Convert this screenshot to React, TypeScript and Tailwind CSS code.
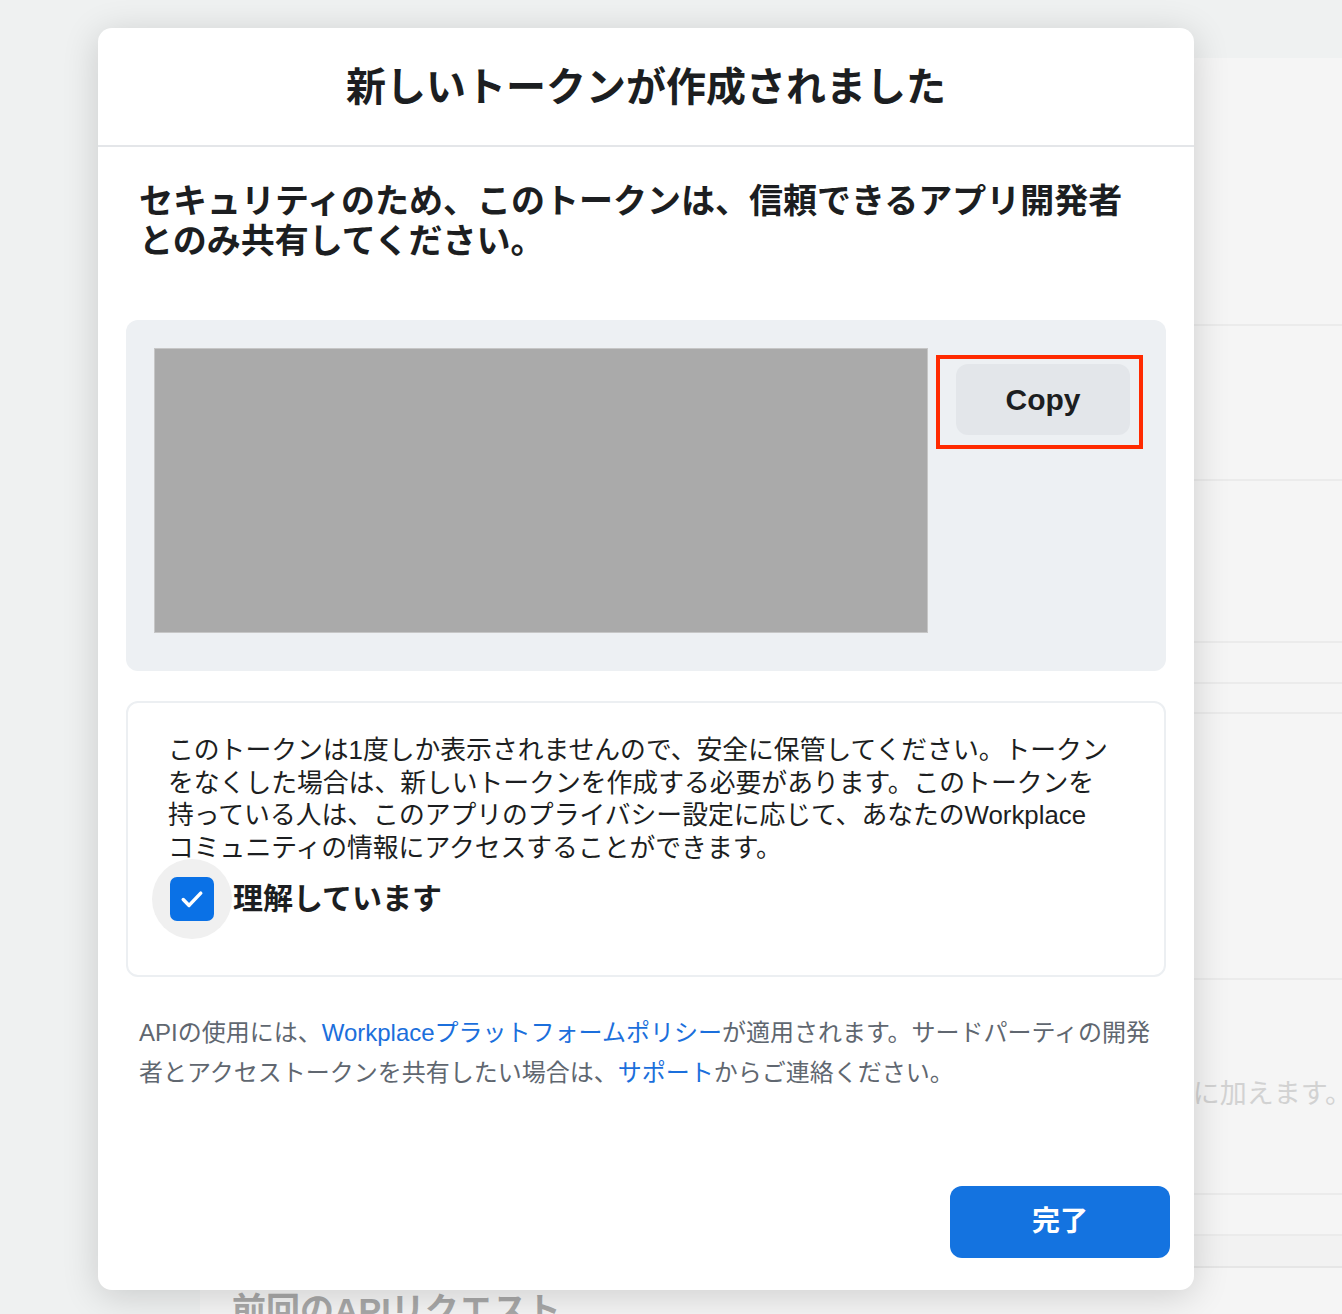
import React from "react";

const FONT = "font-['Liberation_Sans','Noto_Sans_CJK_JP',sans-serif]";

function PageBehind() {
  const rows = [
    "h-[268px]",
    "h-[155px]",
    "h-[162px]",
    "h-[41px]",
    "h-[30px]",
    "h-[266px]",
  ];

  return (
    <div className="flex h-full flex-col">
      <div className="h-[58px] shrink-0" />
      <div className="flex flex-1">
        <div className="w-[200px] shrink-0" />
        <div className="flex flex-1 flex-col bg-[#f5f5f5]">
          {rows.map((h, i) => (
            <div key={i} className={`${h} shrink-0 border-b-2 border-[#ebebeb]`} />
          ))}
          <div className="flex h-[215px] shrink-0 items-center justify-end overflow-hidden border-b-2 border-[#ebebeb] pt-[16px]">
            <span className="mr-[-10px] whitespace-nowrap text-[27px] text-[#d2d2d2]">
              アクセストークンをリクエストに加えます。
            </span>
          </div>
          <div className="h-[41px] shrink-0 border-b-2 border-[#ebebeb]" />
          <div className="h-[32px] shrink-0 border-b-2 border-[#e6e6e6] bg-[#f2f2f2]" />
          <div className="px-[32px] pt-[22px]">
            <span className="whitespace-nowrap text-[34px] font-bold leading-[40px] text-[#a8a8a8]">
              前回のAPIリクエスト
            </span>
          </div>
        </div>
      </div>
    </div>
  );
}

function TokenModal() {
  return (
    <div className="absolute left-[98px] top-[28px] flex h-[1262px] w-[1096px] flex-col rounded-[14px] bg-white shadow-[0_6px_36px_rgba(0,0,0,0.16)]">
      <div className="flex h-[119px] shrink-0 items-center justify-center border-b-2 border-[#e4e6e9]">
        <h1 className="text-[40px] font-bold leading-[50px] text-[#1c1e21]">
          新しいトークンが作成されました
        </h1>
      </div>

      <div className="flex flex-1 flex-col px-[28px]">
        <p className="mt-[34px] whitespace-nowrap px-[13px] text-[34px] font-bold leading-[40px] text-[#1c1e21]">
          セキュリティのため、このトークンは、信頼できるアプリ開発者
          <br />
          とのみ共有してください。
        </p>

        <div className="mt-[59px] flex h-[351px] shrink-0 gap-[28px] rounded-[12px] bg-[#edf0f3] p-[28px] pb-[38px]">
          <div className="h-[285px] w-[774px] shrink-0 border border-[#c6c6c6] bg-[#aaaaaa]" />
          <div className="relative mt-[16px] h-[71px]">
            <button className="flex h-[71px] w-[174px] items-center justify-center rounded-[12px] bg-[#e3e6ea] text-[30px] font-semibold text-[#1c1e21]">
              Copy
            </button>
            <div className="pointer-events-none absolute left-[-20px] top-[-9px] h-[94px] w-[207px] border-4 border-[#ff2a00]" />
          </div>
        </div>

        <div className="mt-[30px] h-[276px] shrink-0 rounded-[12px] border-2 border-[#eceff2] pl-[40px] pr-[30px] pt-[31px]">
          <p className="whitespace-nowrap text-[25.8px] leading-[32.5px] text-[#1c1e21]">
            このトークンは1度しか表示されませんので、安全に保管してください。トークン
            <br />
            をなくした場合は、新しいトークンを作成する必要があります。このトークンを
            <br />
            持っている人は、このアプリのプライバシー設定に応じて、あなたのWorkplace
            <br />
            コミュニティの情報にアクセスすることができます。
          </p>
          <label className="ml-[-16px] mt-[-5px] flex items-center gap-[1px]">
            <span className="flex h-[80px] w-[80px] items-center justify-center rounded-full bg-[#f0f0f0]">
              <span className="flex h-[44px] w-[44px] items-center justify-center rounded-[7px] bg-[#0a71e6]">
                <svg width="28" height="28" viewBox="0 0 24 24" fill="none">
                  <path
                    d="M4.5 12.5l5 5 10-10.5"
                    stroke="white"
                    strokeWidth="3"
                    strokeLinecap="round"
                    strokeLinejoin="round"
                  />
                </svg>
              </span>
            </span>
            <span className="text-[30px] font-bold leading-[40px] text-[#1c1e21]">
              理解しています
            </span>
          </label>
        </div>

        <p className="mt-[36px] whitespace-nowrap px-[13px] text-[24px] leading-[40px] text-[#606770]">
          APIの使用には、
          <a className="text-[#1b6fdc]">Workplaceプラットフォームポリシー</a>
          が適用されます。サードパーティの開発
          <br />
          者とアクセストークンを共有したい場合は、
          <a className="text-[#1b6fdc]">サポート</a>
          からご連絡ください。
        </p>

        <div className="mb-[32px] mr-[-4px] mt-auto flex justify-end">
          <button className="flex h-[72px] w-[220px] items-center justify-center rounded-[12px] bg-[#1473e0] text-[28px] font-bold text-white">
            完了
          </button>
        </div>
      </div>
    </div>
  );
}

export default function App() {
  return (
    <div className={`relative h-[1314px] w-[1342px] overflow-hidden bg-[#eff1f1] ${FONT}`}>
      <PageBehind />
      <TokenModal />
    </div>
  );
}
